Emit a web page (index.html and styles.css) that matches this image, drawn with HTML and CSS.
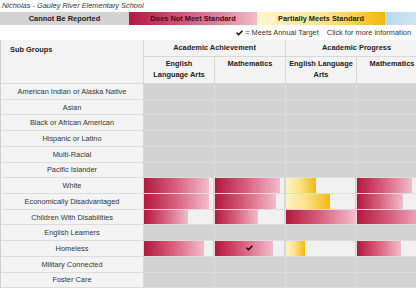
FILE: index.html
```html
<!DOCTYPE html>
<html>
<head>
<meta charset="utf-8">
<link rel="stylesheet" href="styles.css">
</head>
<body>
<div class="title">Nicholas - Gauley River Elementary School</div>
<div class="legend">
  <div class="lg lg-cnr">Cannot Be Reported</div>
  <div class="lg lg-dnm">Does Not Meet Standard</div>
  <div class="lg lg-pms">Partially Meets Standard</div>
  <div class="lg lg-ms"></div>
</div>
<div class="note">
  <span class="note-key"><svg class="chk" viewBox="0 0 10 8"><polygon points="0,4.3 1.6,2.8 3.7,4.8 8.4,0.1 10,1.6 3.7,7.9"/></svg> = Meets Annual Target</span>
  <span class="note-more">Click for more information</span>
</div>
<div class="table-wrap">
<div class="grid">
  <div class="sg-head">Sub Groups</div>
  <div class="grp-head span2">Academic Achievement</div>
  <div class="grp-head span2">Academic Progress</div>
  <div class="sub-head">English<br>Language Arts</div>
  <div class="sub-head">Mathematics</div>
  <div class="sub-head">English Language<br>Arts</div>
  <div class="sub-head">Mathematics</div>

  <div class="sg">American Indian or Alaska Native</div>
  <div class="d"></div><div class="d"></div><div class="d"></div><div class="d"></div>

  <div class="sg">Asian</div>
  <div class="d"></div><div class="d"></div><div class="d"></div><div class="d"></div>

  <div class="sg">Black or African American</div>
  <div class="d"></div><div class="d"></div><div class="d"></div><div class="d"></div>

  <div class="sg">Hispanic or Latino</div>
  <div class="d"></div><div class="d"></div><div class="d"></div><div class="d"></div>

  <div class="sg">Multi-Racial</div>
  <div class="d"></div><div class="d"></div><div class="d"></div><div class="d"></div>

  <div class="sg">Pacific Islander</div>
  <div class="d"></div><div class="d"></div><div class="d"></div><div class="d"></div>

  <div class="sg">White</div>
  <div class="d"><div class="track"><div class="bar red" style="width:94%"></div></div></div>
  <div class="d"><div class="track"><div class="bar red" style="width:94%"></div></div></div>
  <div class="d"><div class="track"><div class="bar yel" style="width:44%"></div></div></div>
  <div class="d"><div class="track"><div class="bar red" style="width:80%"></div></div></div>

  <div class="sg">Economically Disadvantaged</div>
  <div class="d"><div class="track"><div class="bar red" style="width:94%"></div></div></div>
  <div class="d"><div class="track"><div class="bar red" style="width:89%"></div></div></div>
  <div class="d"><div class="track"><div class="bar yel" style="width:64%"></div></div></div>
  <div class="d"><div class="track"><div class="bar red" style="width:66%"></div></div></div>

  <div class="sg">Children With Disabilities</div>
  <div class="d"><div class="track"><div class="bar red" style="width:64%"></div></div></div>
  <div class="d"><div class="track"><div class="bar red" style="width:63%"></div></div></div>
  <div class="d"><div class="track"><div class="bar red" style="width:100%"></div></div></div>
  <div class="d"><div class="track"><div class="bar red" style="width:100%"></div></div></div>

  <div class="sg">English Learners</div>
  <div class="d"></div><div class="d"></div><div class="d"></div><div class="d"></div>

  <div class="sg">Homeless</div>
  <div class="d"><div class="track"><div class="bar red" style="width:87%"></div></div></div>
  <div class="d"><div class="track"><div class="bar red" style="width:84%"></div><svg class="chk cell-chk" viewBox="0 0 10 8"><polygon points="0,4.3 1.6,2.8 3.7,4.8 8.4,0.1 10,1.6 3.7,7.9"/></svg></div></div>
  <div class="d"><div class="track"><div class="bar yel" style="width:27%"></div></div></div>
  <div class="d"><div class="track"><div class="bar red" style="width:64%"></div></div></div>

  <div class="sg">Military Connected</div>
  <div class="d"></div><div class="d"></div><div class="d"></div><div class="d"></div>

  <div class="sg">Foster Care</div>
  <div class="d"></div><div class="d"></div><div class="d"></div><div class="d"></div>
</div>
</div>
</body>
</html>
```
FILE: styles.css
```css
html, body {
  margin: 0;
  padding: 0;
}
body {
  width: 416px;
  height: 288px;
  overflow: hidden;
  background: #fff;
  font-family: "Liberation Sans", Arial, sans-serif;
  font-size: 7.4px;
  color: #333;
}
.title {
  height: 12px;
  line-height: 12px;
  padding-left: 2px;
  font-style: italic;
  color: #333;
  white-space: nowrap;
}
.legend {
  display: grid;
  grid-template-columns: 129px 128px 128px 31px;
  height: 13px;
  width: 416px;
}
.lg {
  font-weight: bold;
  text-align: center;
  line-height: 13px;
  white-space: nowrap;
}
.lg-cnr {
  background: #d3d3d3;
  color: #222;
}
.lg-dnm {
  background: linear-gradient(to right, #b7163f, #e08aa2 75%, #f1bccb);
  color: #4a0716;
}
.lg-pms {
  background: linear-gradient(to right, #fff6cf, #fbe38a 55%, #f3b70a);
  color: #2a2200;
}
.lg-ms {
  background: linear-gradient(to right, #b9d9ee, #cfe5f4);
}
.note {
  height: 15px;
  display: flex;
  justify-content: flex-end;
  align-items: center;
  gap: 8px;
  padding-right: 5px;
  color: #333;
  white-space: nowrap;
}
.note-key {
  display: flex;
  align-items: center;
  gap: 2px;
}
.chk {
  width: 7px;
  height: 6px;
  fill: #111;
}
.table-wrap {
  width: 416px;
  overflow: hidden;
}
.grid {
  display: grid;
  grid-template-columns: 144px 71px 71px 71px 71px;
  grid-template-rows: 17px 27px repeat(13, 15.73px);
  width: 428px;
  border-top: 1px solid #cfcfcf;
  margin-top: -1px;
}
.grid > div {
  box-sizing: border-box;
}
.sg-head {
  grid-row: span 2;
  background: #f3f3f3;
  border-right: 1px solid #d8d8d8;
  border-bottom: 1px solid #d8d8d8;
  border-left: 1px solid #cfcfcf;
  font-weight: bold;
  color: #222;
  padding: 5px 0 0 9px;
}
.grp-head {
  background: #f3f3f3;
  border-right: 1px solid #d8d8d8;
  border-bottom: 1px solid #d8d8d8;
  font-weight: bold;
  color: #222;
  text-align: center;
  line-height: 16px;
}
.span2 {
  grid-column: span 2;
}
.sub-head {
  background: #f3f3f3;
  border-right: 1px solid #d8d8d8;
  border-bottom: 1px solid #d8d8d8;
  font-weight: bold;
  color: #222;
  text-align: center;
  line-height: 10.5px;
  padding-top: 2px;
}
.sg {
  background: #f3f3f3;
  border-right: 1px solid #d8d8d8;
  border-bottom: 1px solid #dcdcdc;
  border-left: 1px solid #cfcfcf;
  display: flex;
  align-items: center;
  justify-content: center;
  color: #333;
  white-space: nowrap;
}
.d {
  background: #d3d3d4;
  border-right: 1px solid #dcdcdc;
  border-bottom: 1px solid #dcdcdc;
  display: flex;
}
.track {
  position: relative;
  flex: 1;
  margin-right: 1px;
  background: #f0f0f0;
  display: flex;
}
.bar {
  height: 100%;
}
.red {
  background: linear-gradient(to right, #b5173e, #d9627f 50%, #f2bccb);
}
.yel {
  background: linear-gradient(to right, #fdf2c2, #fbe389 45%, #f3b80c);
}
.cell-chk {
  position: absolute;
  left: 31px;
  top: 4px;
}
```
